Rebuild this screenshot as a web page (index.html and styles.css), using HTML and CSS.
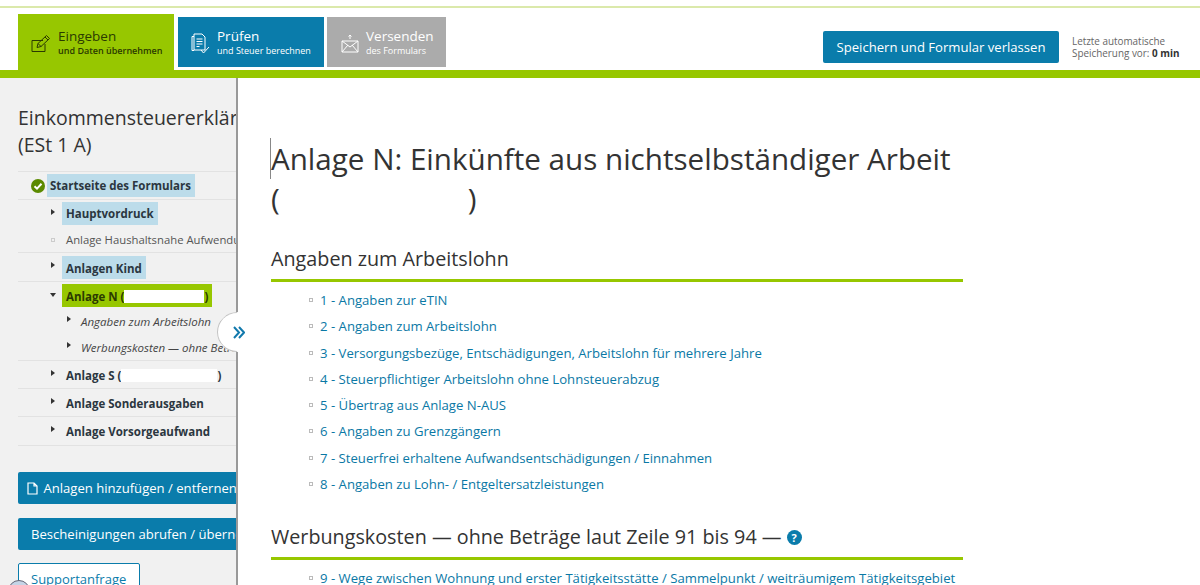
FILE: index.html
```html
<!DOCTYPE html>
<html lang="de">
<head>
  <meta charset="UTF-8" />
  <title>Anlage N</title>
  <link rel="stylesheet" href="styles.css">
</head>
<body>
  <header class="kopf">
    <nav class="schritte">
      <a class="schritt aktiv">
        <svg class="schritt-icon" viewBox="0 0 20 19" width="20" height="19" fill="none" stroke="currentColor" stroke-width="1">
          <path d="M12 6.500H1v11h13V10"/>
          <path d="M6 13.500l1-4 8.500-8 3 3-8.500 8z"/>
          <path d="M7 9.500l3 3M14 3l3 3"/>
        </svg>
        <span class="schritt-text"><b>Eingeben</b><small>und Daten übernehmen</small></span>
      </a>
      <a class="schritt blau">
        <svg class="schritt-icon" viewBox="0 0 19 21" width="19" height="21" fill="none" stroke="currentColor" stroke-width="1">
          <path d="M3 3.500H1v14h2"/>
          <path d="M3 1h8l3 3v13H3z"/>
          <path d="M5.500 6h6M5.500 8.500h6M5.500 11h6M5.500 13.500h3"/>
          <path d="M10 17l2.500 3 5.500-6"/>
        </svg>
        <span class="schritt-text"><b>Prüfen</b><small>und Steuer berechnen</small></span>
      </a>
      <a class="schritt grau">
        <svg class="schritt-icon" viewBox="0 0 18 20" width="18" height="20" fill="none" stroke="currentColor" stroke-width="1">
          <path d="M1 8h16v11H1zM1 8l8 6 8-6M1 19l6-7M17 19l-6-7"/>
          <path d="M9 6V2M7.500 3.500L9 2l1.500 1.500"/>
        </svg>
        <span class="schritt-text"><b>Versenden</b><small>des Formulars</small></span>
      </a>
    </nav>
    <div class="kopf-rechts">
      <a class="btn btn-speichern">Speichern und Formular verlassen</a>
      <p class="autosave">Letzte automatische<br>Speicherung vor: <b>0 min</b></p>
    </div>
  </header>

  <div class="spalten">
    <aside class="seite">
      <h2 class="seite-titel">Einkommensteuererklärung<br>(ESt 1 A)</h2>
      <ul class="baum">
        <li class="start">
          <svg class="check" viewBox="0 0 14 14" width="14" height="14">
            <circle cx="7" cy="7" r="7" fill="#5b8a00"/>
            <path d="M3.500 7.200l2.500 2.400 4.500-4.800" fill="none" stroke="#fff" stroke-width="2"/>
          </svg>
          <span class="mark">Startseite des Formulars</span>
        </li>
        <li class="knoten zu ohne-linie"><span class="mark">Hauptvordruck</span></li>
        <li class="blatt">Anlage Haushaltsnahe Aufwendungen</li>
        <li class="knoten zu kind"><span class="mark">Anlagen Kind</span></li>
        <li class="knoten offen">
          <span class="mark gruen">Anlage N (<i class="schwaerzung"></i>)</span>
          <ul class="unter">
            <li>Angaben zum Arbeitslohn</li>
            <li>Werbungskosten — ohne Beträge</li>
          </ul>
        </li>
        <li class="knoten zu"><span class="plain">Anlage S (<i class="schwaerzung lang"></i>)</span></li>
        <li class="knoten zu"><span class="plain">Anlage Sonderausgaben</span></li>
        <li class="knoten zu letzte"><span class="plain">Anlage Vorsorgeaufwand</span></li>
      </ul>
      <a class="btn btn-seite">
        <svg viewBox="0 0 11 13" width="11" height="13" fill="none" stroke="#fff" stroke-width="1.200">
          <path d="M1 1h6l3 3v8H1zM7 1v3h3"/>
        </svg>
        Anlagen hinzufügen / entfernen
      </a>
      <a class="btn btn-seite btn-zwei">Bescheinigungen abrufen / übernehmen</a>
      <a class="btn-support">Supportanfrage</a>
    </aside>

    <main class="inhalt">
      <h1 class="titel"><span class="marke">Anlage N: Einkünfte aus nichtselbständiger Arbeit</span><br>(<i class="luecke"></i>)</h1>

      <h2 class="abschnitt">Angaben zum Arbeitslohn</h2>
      <ul class="links">
        <li><a>1 - Angaben zur eTIN</a></li>
        <li><a>2 - Angaben zum Arbeitslohn</a></li>
        <li><a>3 - Versorgungsbezüge, Entschädigungen, Arbeitslohn für mehrere Jahre</a></li>
        <li><a>4 - Steuerpflichtiger Arbeitslohn ohne Lohnsteuerabzug</a></li>
        <li><a>5 - Übertrag aus Anlage N-AUS</a></li>
        <li><a>6 - Angaben zu Grenzgängern</a></li>
        <li><a>7 - Steuerfrei erhaltene Aufwandsentschädigungen / Einnahmen</a></li>
        <li><a>8 - Angaben zu Lohn- / Entgeltersatzleistungen</a></li>
      </ul>

      <h2 class="abschnitt zweiter">Werbungskosten — ohne Beträge laut Zeile 91 bis 94 — <span class="hilfe">?</span></h2>
      <ul class="links">
        <li><a>9 - Wege zwischen Wohnung und erster Tätigkeitsstätte / Sammelpunkt / weiträumigem Tätigkeitsgebiet</a></li>
      </ul>
    </main>
  </div>

  <button class="einklappen" aria-label="Seitenleiste">
    <svg viewBox="0 0 12 13" width="12" height="13" fill="none" stroke="#1279ac" stroke-width="2">
      <path d="M1 1l5 5.500L1 12M6 1l5 5.500L6 12"/>
    </svg>
  </button>
  <span class="chat-kreis"></span>
</body>
</html>
```

FILE: styles.css
```css
html, body {
  margin: 0;
  height: 585px;
  overflow: hidden;
}
body {
  font-family: "Open Sans", Arial, sans-serif;
  color: #333;
  background-color: #fff;
  position: relative;
}
a {
  text-decoration: none;
}

/* Kopfbereich */
.kopf {
  height: 56px;
  margin-top: 6px;
  padding: 6px 0 0 18px;
  border-top: 2px solid #dbe9ab;
  border-bottom: 8px solid #97c700;
  display: flex;
  justify-content: space-between;
  align-items: flex-start;
}
.schritte {
  display: flex;
  align-items: center;
  height: 56px;
}
.schritt {
  display: flex;
  align-items: center;
  height: 50px;
  padding-top: 2px;
  color: #fff;
  box-sizing: border-box;
  white-space: nowrap;
}
.schritt-text b {
  display: block;
  font-weight: 400;
  font-size: 13.500px;
  line-height: 16px;
}
.schritt-text small {
  display: block;
  font-size: 9px;
  line-height: 14px;
}
.schritt-icon {
  flex: none;
  margin-right: 7px;
}
.aktiv {
  width: 156px;
  height: 56px;
  padding-left: 13px;
  background-color: #97c700;
  color: #2b3a00;
  margin-right: 4px;
}
.aktiv small {
  font-weight: 600;
}
.blau {
  width: 146px;
  padding-left: 13px;
  background-color: #0a7cab;
  margin-right: 3px;
}
.grau {
  width: 119px;
  padding-left: 14px;
  background-color: #ababab;
}
.kopf-rechts {
  display: flex;
  align-items: center;
  margin-top: 17px;
  height: 32px;
}
.btn {
  display: block;
  background-color: #0a7cab;
  color: #fff;
  border-radius: 2px;
}
.btn-speichern {
  width: 236px;
  height: 32px;
  line-height: 32px;
  margin-right: 13px;
  text-align: center;
  font-size: 13.100px;
}
.autosave {
  width: 128px;
  margin: 0;
  font-size: 9.900px;
  line-height: 12px;
  color: #666;
}
.autosave b {
  color: #333;
}

/* Spalten */
.spalten {
  display: grid;
  grid-template-columns: 238px 1fr;
  height: 507px;
}
.seite {
  background-color: #f1f1f1;
  border-right: 2px solid #999;
  overflow: hidden;
  padding: 26px 0 0 18px;
  box-sizing: border-box;
  white-space: nowrap;
}
.seite-titel {
  margin: 0;
  font-size: 19.500px;
  font-weight: 400;
  line-height: 27px;
  color: #333;
}
.baum {
  list-style: none;
  margin: 13px 0 0;
  padding: 0;
  width: 240px;
  border-top: 1px solid #e2e2e2;
  font-size: 11.500px;
}
.baum > li {
  border-bottom: 1px solid #e2e2e2;
  position: relative;
}
.start {
  padding: 2px 0 2px 13px;
  display: flex;
  align-items: center;
  height: 23px;
}
.check {
  margin-right: 2px;
  flex: none;
}
.mark {
  display: block;
  width: max-content;
  height: 23px;
  background-color: #bcdcea;
  padding: 0 4px;
  line-height: 23px;
  font-weight: 700;
  color: #2b3640;
}
.start .mark {
  padding: 0 4px 0 3px;
}
.kind .mark,
.mark.gruen {
  line-height: 25px;
}
.knoten {
  padding: 2px 0 2px 44px;
}
.baum > .ohne-linie {
  border-bottom: none;
}
.baum > .kind {
  padding-top: 3px;
}
.baum > .letzte {
  padding-bottom: 3px;
}
.knoten::before {
  content: "";
  position: absolute;
  left: 33px;
  top: 9px;
  border-style: solid;
  border-width: 3px 0 3px 4px;
  border-color: transparent transparent transparent #333;
}
.knoten.offen {
  padding-bottom: 0;
}
.knoten.offen::before {
  top: 11px;
  left: 32px;
  border-width: 4px 3px 0 3px;
  border-color: #333 transparent transparent transparent;
}
.mark.gruen {
  background-color: #97c700;
  color: #2b3a00;
}
.plain {
  display: block;
  height: 23px;
  padding-left: 4px;
  font-weight: 700;
  line-height: 25px;
  color: #2b3640;
}
.blatt {
  padding: 0 0 0 48px;
  height: 25px;
  line-height: 25px;
  color: #555;
  font-size: 11.300px;
}
.blatt::before {
  content: "";
  position: absolute;
  left: 33px;
  top: 11px;
  width: 2px;
  height: 2px;
  border: 1px solid #ccc;
}
.schwaerzung {
  display: inline-block;
  width: 80px;
  height: 13px;
  background-color: #fff;
  vertical-align: -2px;
}
.schwaerzung.lang {
  width: 96px;
}
.unter {
  list-style: none;
  margin: 1px 0 0;
  padding: 0 0 0 19px;
  font-style: italic;
  font-size: 11.500px;
  color: #444;
}
.unter li {
  line-height: 28px;
  height: 26px;
  position: relative;
}
.unter li::before {
  content: "";
  position: absolute;
  left: -14px;
  top: 8px;
  border-style: solid;
  border-width: 3px 0 3px 4px;
  border-color: transparent transparent transparent #333;
}
.btn-seite {
  width: 240px;
  height: 32px;
  line-height: 32px;
  margin-top: 26px;
  padding-left: 9px;
  font-size: 13.100px;
}
.btn-seite svg {
  vertical-align: -2px;
  margin-right: 2px;
}
.btn-zwei {
  margin-top: 14px;
  padding-left: 13px;
}
.btn-support {
  display: block;
  width: 122px;
  height: 32px;
  line-height: 30px;
  margin-top: 13px;
  box-sizing: border-box;
  padding-left: 12px;
  border: 1px solid #0a7cab;
  border-radius: 2px;
  background-color: #fff;
  color: #0a7cab;
  font-size: 13px;
}

/* Inhalt */
.inhalt {
  padding: 61px 0 0 33px;
  width: 692px;
}
.titel {
  margin: 0 0 25px;
  font-size: 29.600px;
  font-weight: 400;
  line-height: 40px;
  color: #333;
  white-space: nowrap;
}
.marke {
  border-left: 1px solid #888;
  margin-left: -1px;
}
.luecke {
  display: inline-block;
  width: 188px;
}
.abschnitt {
  margin: 0;
  padding-bottom: 5px;
  border-bottom: 3px solid #97c700;
  font-size: 19.750px;
  font-weight: 400;
  line-height: 30px;
  color: #333;
}
.zweiter {
  margin-top: 25px;
}
.hilfe {
  display: inline-block;
  width: 15px;
  height: 15px;
  border-radius: 50%;
  background-color: #0a7cab;
  color: #fff;
  font-size: 11px;
  font-weight: 700;
  line-height: 15px;
  text-align: center;
  vertical-align: 2px;
}
.links {
  list-style: none;
  margin: 5px 0 0;
  padding: 0 0 0 49px;
  font-size: 13.150px;
}
.links li {
  line-height: 26.300px;
  position: relative;
}
.links li::before {
  content: "";
  position: absolute;
  left: -11px;
  top: 11px;
  width: 2px;
  height: 2px;
  border: 1px solid #bbb;
}
.links a {
  color: #0a78a5;
  white-space: nowrap;
}

/* Über dem Inhalt liegend */
.einklappen {
  position: absolute;
  left: 217px;
  top: 312px;
  width: 40px;
  height: 40px;
  padding: 0 0 0 16px;
  border: none;
  border-radius: 50%;
  background-color: #fff;
  display: flex;
  align-items: center;
}
.einklappen::before {
  content: "";
  position: absolute;
  inset: 0;
  box-sizing: border-box;
  border: 1px solid transparent;
  border-left-color: #c4c4c4;
  border-top-color: #c4c4c4;
  border-radius: 50%;
  transform: rotate(-45deg);
}
.chat-kreis {
  position: absolute;
  left: 8px;
  top: 580px;
  width: 22px;
  height: 22px;
  box-sizing: border-box;
  border: 1px solid #667;
  border-radius: 50%;
  background-color: #c5d4e6;
}
```
